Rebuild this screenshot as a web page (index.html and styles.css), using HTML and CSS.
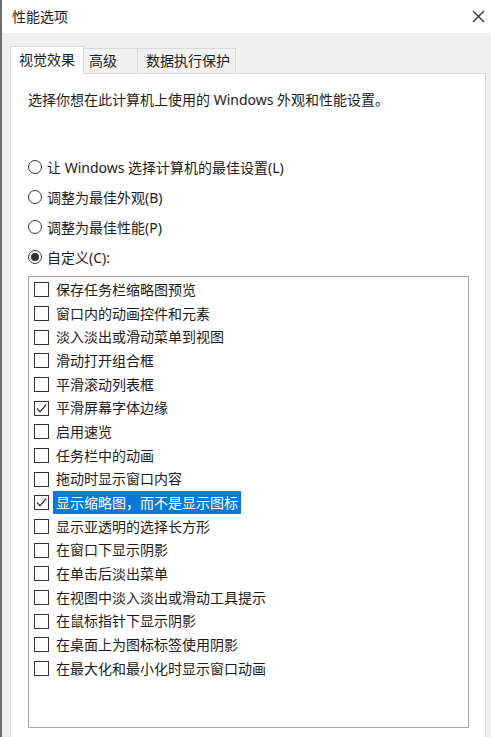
FILE: index.html
```html
<!DOCTYPE html>
<html lang="zh-CN">
<head>
  <meta charset="UTF-8" />
  <meta name="viewport" content="width=device-width, initial-scale=1" />
  <title>性能选项</title>
  <link rel="stylesheet" href="styles.css">
</head>
<body>
  <div class="window">
    <div class="titlebar">
      <span class="title">性能选项</span>
      <svg class="close" width="13" height="13" viewBox="0 0 13 13">
        <path d="M1 1 L12 12 M12 1 L1 12" stroke="#2b2b2b" stroke-width="1.2" fill="none" />
      </svg>
    </div>

    <div class="content">
      <!-- Tabs -->
      <div class="tabs">
        <div class="tab active">视觉效果</div>
        <div class="tab tab-adv">高级</div>
        <div class="tab tab-dep">数据执行保护</div>
      </div>

      <!-- Visual effects page -->
      <div class="panel">
        <p class="desc">选择你想在此计算机上使用的 Windows 外观和性能设置。</p>

        <div class="radios">
          <div class="radio"><span class="circle"></span>让 Windows 选择计算机的最佳设置(L)</div>
          <div class="radio"><span class="circle"></span>调整为最佳外观(B)</div>
          <div class="radio"><span class="circle"></span>调整为最佳性能(P)</div>
          <div class="radio"><span class="circle on"></span>自定义(C):</div>
        </div>

        <div class="list">
          <div class="item"><span class="box"></span><span class="label">保存任务栏缩略图预览</span></div>
          <div class="item"><span class="box"></span><span class="label">窗口内的动画控件和元素</span></div>
          <div class="item"><span class="box"></span><span class="label">淡入淡出或滑动菜单到视图</span></div>
          <div class="item"><span class="box"></span><span class="label">滑动打开组合框</span></div>
          <div class="item"><span class="box"></span><span class="label">平滑滚动列表框</span></div>
          <div class="item"><span class="box"><svg viewBox="0 0 13 13"><path d="M2 6.5 L5 9.8 L11.2 2.5" /></svg></span><span class="label">平滑屏幕字体边缘</span></div>
          <div class="item"><span class="box"></span><span class="label">启用速览</span></div>
          <div class="item"><span class="box"></span><span class="label">任务栏中的动画</span></div>
          <div class="item"><span class="box"></span><span class="label">拖动时显示窗口内容</span></div>
          <div class="item"><span class="box"><svg viewBox="0 0 13 13"><path d="M2 6.5 L5 9.8 L11.2 2.5" /></svg></span><span class="label selected">显示缩略图，而不是显示图标</span></div>
          <div class="item"><span class="box"></span><span class="label">显示亚透明的选择长方形</span></div>
          <div class="item"><span class="box"></span><span class="label">在窗口下显示阴影</span></div>
          <div class="item"><span class="box"></span><span class="label">在单击后淡出菜单</span></div>
          <div class="item"><span class="box"></span><span class="label">在视图中淡入淡出或滑动工具提示</span></div>
          <div class="item"><span class="box"></span><span class="label">在鼠标指针下显示阴影</span></div>
          <div class="item"><span class="box"></span><span class="label">在桌面上为图标标签使用阴影</span></div>
          <div class="item"><span class="box"></span><span class="label">在最大化和最小化时显示窗口动画</span></div>
        </div>
      </div>
    </div>
  </div>
</body>
</html>
```

FILE: styles.css
```css
body {
  margin: 0;
  font-family: "Noto Sans", "Noto Sans CJK SC", sans-serif;
  font-size: 14px;
  color: #1c1c1c;
  background: #f0f0f0;
  overflow: hidden;
}
.window {
  height: 737px;
  border-left: 2px solid #6e6e6e;
  display: flex;
  flex-direction: column;
}
.titlebar {
  height: 33px;
  background: #fff;
  display: flex;
  justify-content: space-between;
  align-items: center;
  padding: 0 6px 0 10px;
  flex-shrink: 0;
}
.title {
  line-height: 20px;
}
.close {
  display: block;
}
.content {
  flex: 1;
  display: flex;
  flex-direction: column;
  padding: 13px 5px 0 8px;
  min-height: 0;
}
.tabs {
  display: flex;
  align-items: flex-end;
  height: 27px;
  position: relative;
  z-index: 1;
}
.tab {
  box-sizing: border-box;
  height: 25px;
  line-height: 23px;
  border: 1px solid #d9d9d9;
  border-bottom: none;
  background: #f0f0f0;
  white-space: nowrap;
}
.tab.active {
  width: 74px;
  height: 28px;
  line-height: 26px;
  margin-bottom: -1px;
  padding-left: 8px;
  background: #fff;
}
.tab-adv {
  width: 54px;
  padding-left: 5px;
  border-left: none;
}
.tab-dep {
  width: 98px;
  padding-left: 8px;
  border-left: none;
}
.panel {
  flex: 1;
  background: #fff;
  border: 1px solid #d9d9d9;
  border-bottom: none;
  padding: 16px 0 0 17px;
  min-height: 0;
}
.desc {
  margin: 0;
  line-height: 20px;
}
.radios {
  margin-top: 42px;
}
.radio {
  display: flex;
  align-items: center;
  height: 30px;
}
.circle {
  box-sizing: border-box;
  width: 14px;
  height: 14px;
  border: 1px solid #333;
  border-radius: 50%;
  margin-right: 5px;
  display: flex;
  align-items: center;
  justify-content: center;
}
.circle.on::after {
  content: "";
  width: 8px;
  height: 8px;
  border-radius: 50%;
  background: #333;
}
.list {
  box-sizing: border-box;
  width: 441px;
  height: 452px;
  margin-top: 4px;
  border: 1px solid #a8a8a8;
  padding: 1px 0 0 5px;
}
.item {
  display: flex;
  align-items: center;
  height: 23.67px;
}
.box {
  box-sizing: border-box;
  width: 15px;
  height: 15px;
  border: 1px solid #333;
  margin-right: 4px;
  flex-shrink: 0;
}
.box svg {
  display: block;
  width: 13px;
  height: 13px;
  fill: none;
  stroke: #333;
  stroke-width: 1.3;
}
.label {
  padding: 0 3px;
  line-height: 23.4px;
}
.label.selected {
  background: #0a79d8;
  color: #fff;
}
```
